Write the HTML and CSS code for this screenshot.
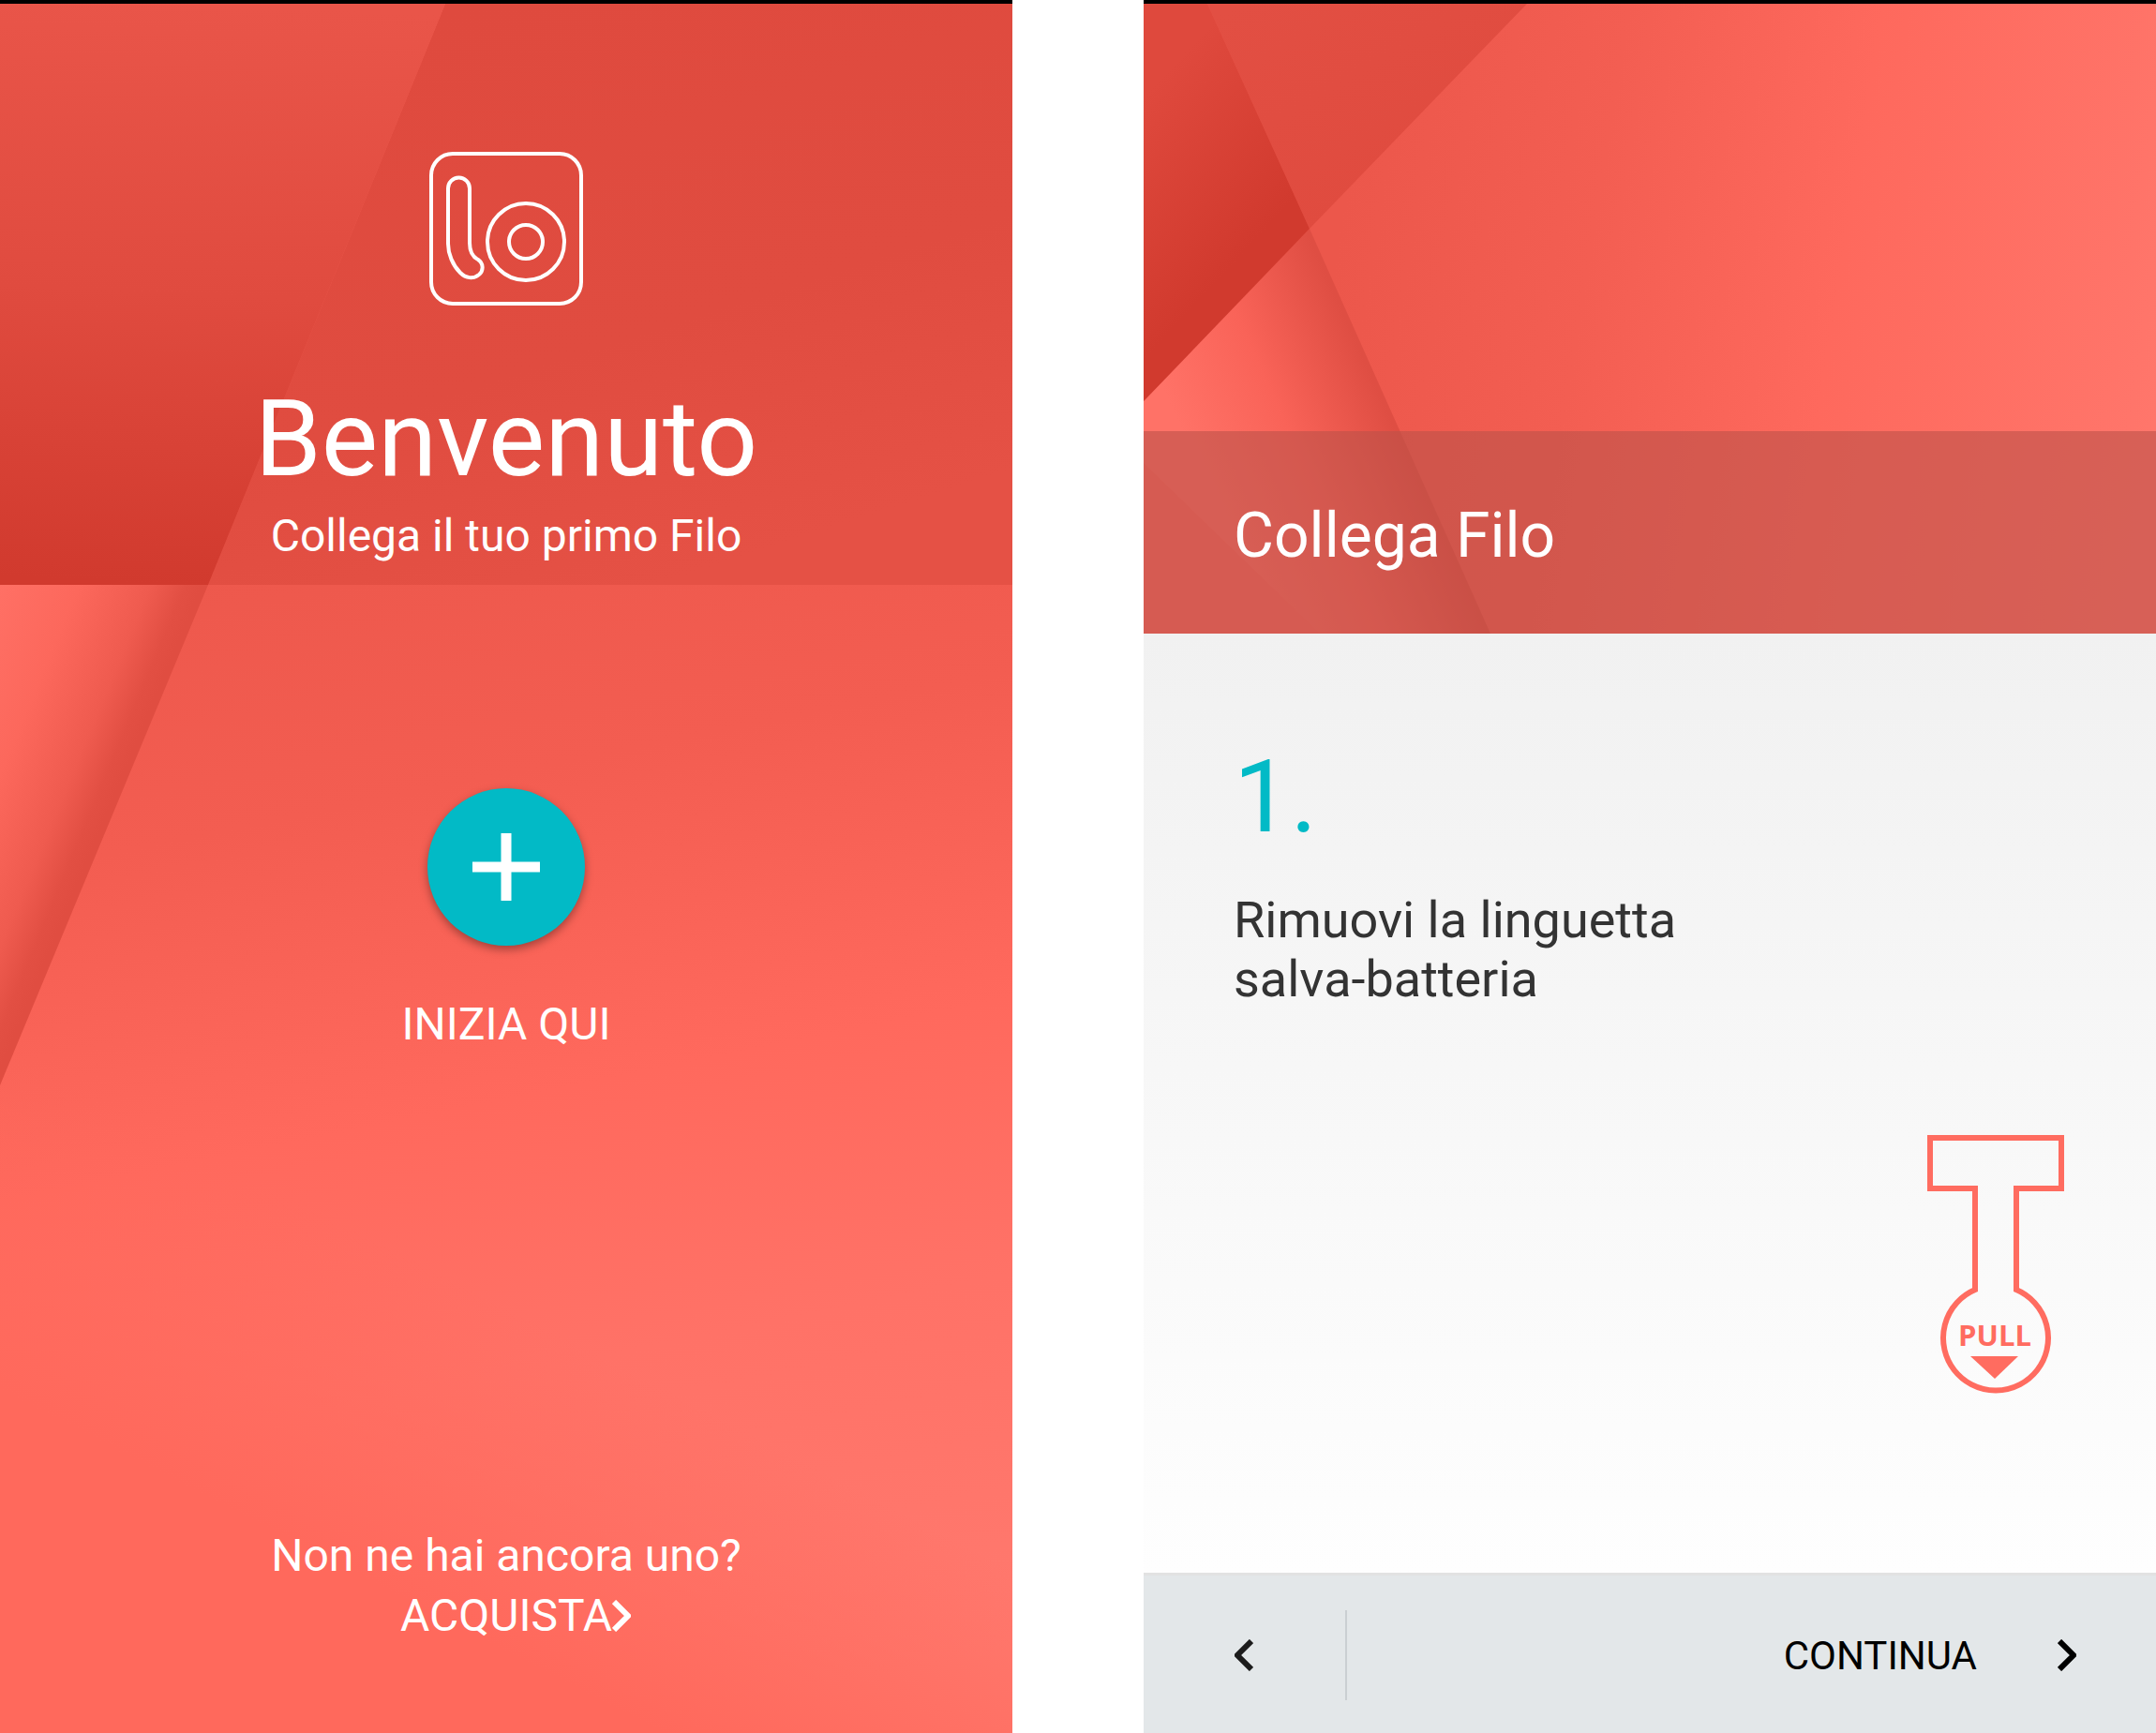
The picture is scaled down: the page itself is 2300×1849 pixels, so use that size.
FILE: index.html
```html
<!DOCTYPE html>
<html lang="it">

<head>
  <meta charset="UTF-8">
  <meta name="viewport" content="width=device-width, initial-scale=1.0">
  <title>Filo</title>
  <link rel="stylesheet" href="styles.css">
</head>

<body>
  <main class="screens">

    <!-- welcome -->
    <section class="screen welcome">
      <svg class="paper" viewBox="0 0 1080 1845" preserveAspectRatio="none" aria-hidden="true">
        <defs>
          <linearGradient id="w-base" gradientUnits="userSpaceOnUse" x1="380" y1="560" x2="640" y2="1845">
            <stop offset="0" stop-color="#ed584c" />
            <stop offset=".22" stop-color="#f35d51" />
            <stop offset=".48" stop-color="#ff695d" />
            <stop offset=".7" stop-color="#ff7267" />
            <stop offset="1" stop-color="#ff796e" />
          </linearGradient>
          <linearGradient id="w-top" gradientUnits="userSpaceOnUse" x1="500" y1="0" x2="700" y2="620">
            <stop offset="0" stop-color="#df4a3e" />
            <stop offset=".6" stop-color="#e04c40" />
            <stop offset="1" stop-color="#e55145" />
          </linearGradient>
          <linearGradient id="w-left" gradientUnits="userSpaceOnUse" x1="220" y1="0" x2="190" y2="620">
            <stop offset="0" stop-color="#e95549" />
            <stop offset=".5" stop-color="#e04b3f" />
            <stop offset="1" stop-color="#d13a2e" />
          </linearGradient>
          <linearGradient id="w-fold" gradientUnits="userSpaceOnUse" x1="-60" y1="760" x2="125" y2="837">
            <stop offset="0" stop-color="#ff7065" />
            <stop offset=".4" stop-color="#fc685c" />
            <stop offset=".75" stop-color="#ef5b4f" />
            <stop offset=".92" stop-color="#e24f43" />
            <stop offset="1" stop-color="#e04d41" />
          </linearGradient>
          <linearGradient id="w-bottom" gradientUnits="userSpaceOnUse" x1="350" y1="1660" x2="500" y2="1370">
            <stop offset="0" stop-color="#ff695c" />
            <stop offset="1" stop-color="#ff695c" stop-opacity="0" />
          </linearGradient>
        </defs>
        <rect width="1080" height="1845" fill="url(#w-base)" />
        <rect width="1080" height="1845" fill="url(#w-bottom)" />
        <path d="M0 620H222L0 1154Z" fill="url(#w-fold)" />
        <path d="M475 0H1080V620H222Z" fill="url(#w-top)" />
        <path d="M0 0H475L222 620H0Z" fill="url(#w-left)" />
      </svg>

      <header class="welcome-top">
        <svg class="logo" viewBox="0 0 164 164" role="img" aria-label="Filo">
          <rect x="2" y="2" width="160" height="160" rx="23" />
          <path d="M20 39a11 11 0 0 1 23 0V97C43 106 46 112 52 115C58 119 58 127 53 131C47 136 39 135 33 129C25 121 20 109 20 98Z" />
          <circle cx="103" cy="96" r="41" />
          <circle cx="103" cy="96" r="18" />
        </svg>
        <h1>Benvenuto</h1>
        <p>Collega il tuo primo Filo</p>
      </header>

      <div class="start">
        <button class="fab" id="start" aria-labelledby="start-label">
          <svg viewBox="0 0 72 72" aria-hidden="true">
            <path d="M36 0V72M0 36H72" />
          </svg>
        </button>
        <label id="start-label" for="start">INIZIA QUI</label>
      </div>

      <footer class="buy">
        <p>Non ne hai ancora uno?</p>
        <a href="#">ACQUISTA<svg class="chevron" viewBox="0 0 20 34" aria-hidden="true"><path d="M2 2L17 17L2 32" /></svg></a>
      </footer>
    </section>

    <!-- step 1 -->
    <section class="screen step">
      <header class="cover">
        <svg class="paper" viewBox="0 0 1080 672" preserveAspectRatio="none" aria-hidden="true">
          <defs>
            <linearGradient id="s-base" gradientUnits="userSpaceOnUse" x1="200" y1="300" x2="1080" y2="440">
              <stop offset="0" stop-color="#ec574b" />
              <stop offset=".3" stop-color="#f35e52" />
              <stop offset=".6" stop-color="#fe695d" />
              <stop offset="1" stop-color="#ff766b" />
            </linearGradient>
            <linearGradient id="s-fold" gradientUnits="userSpaceOnUse" x1="70" y1="520" x2="260" y2="435">
              <stop offset="0" stop-color="#ff7267" />
              <stop offset=".5" stop-color="#f96358" />
              <stop offset="1" stop-color="#df4e43" />
            </linearGradient>
            <linearGradient id="s-left" gradientUnits="userSpaceOnUse" x1="0" y1="100" x2="140" y2="230">
              <stop offset="0" stop-color="#df493d" />
              <stop offset="1" stop-color="#d13a2e" />
            </linearGradient>
            <linearGradient id="s-top" gradientUnits="userSpaceOnUse" x1="100" y1="0" x2="230" y2="220">
              <stop offset="0" stop-color="#e24f43" />
              <stop offset="1" stop-color="#e04b3f" />
            </linearGradient>
          </defs>
          <rect width="1080" height="672" fill="url(#s-base)" />
          <path d="M0 424L177 240L370 672H0Z" fill="url(#s-fold)" />
          <path d="M0 490L188 672H0Z" fill="#fc6a5f" />
          <path d="M68 0H409L177 240Z" fill="url(#s-top)" />
          <path d="M0 0H68L177 240L0 424Z" fill="url(#s-left)" />
        </svg>
        <h2>Collega Filo</h2>
      </header>

      <div class="step-body">
        <span class="number">1.</span>
        <p>Rimuovi la linguetta<br>salva-batteria</p>
        <svg class="tab" viewBox="0 0 146 276" role="img" aria-label="Pull">
          <path class="outline" d="M51 165V57H3V3H143V57H95V165A56 56 0 1 1 51 165Z" />
          <text x="72" y="225">PULL</text>
          <path class="arrow" d="M46 236H97L72 260Z" />
        </svg>
      </div>

      <nav class="bar">
        <button class="back" aria-label="Indietro">
          <svg class="chevron" viewBox="0 0 20 34" aria-hidden="true"><path d="M18 2L3 17L18 32" /></svg>
        </button>
        <button class="next">
          CONTINUA
          <svg class="chevron" viewBox="0 0 20 34" aria-hidden="true"><path d="M2 2L17 17L2 32" /></svg>
        </button>
      </nav>
    </section>

  </main>
</body>

</html>
```
FILE: styles.css
```css
* {
  box-sizing: border-box;
}

body {
  margin: 0;
  background: #fff;
  font-family: Roboto, "Liberation Sans", sans-serif;
}

h1, h2, p {
  margin: 0;
  font-weight: 400;
}

button {
  border: 0;
  padding: 0;
  background: none;
  font: inherit;
  color: inherit;
  cursor: pointer;
}

.screens {
  display: grid;
  grid-template-columns: 1fr 1fr;
  gap: 140px;
  min-height: 100vh;
}

.screen {
  display: flex;
  flex-direction: column;
  border-top: 4px solid #000;
}

/* folded paper behind the content */
.paper {
  position: absolute;
  inset: 0;
  width: 100%;
  height: 100%;
  z-index: -1;
}

.chevron {
  width: 20px;
  height: 34px;
  fill: none;
  stroke: currentColor;
  stroke-width: 6;
}

/* welcome */
.welcome {
  position: relative;
  z-index: 0;
  align-items: center;
  color: #fff;
  font-size: 48px;
  line-height: 64px;
  text-align: center;
}

.welcome-top {
  display: flex;
  flex-direction: column;
  align-items: center;
  padding-top: 158px;

  h1 {
    margin-top: 74px;
    font-size: 114px;
    line-height: 136px;
  }

  p {
    margin-top: 4px;
  }
}

.logo {
  width: 164px;
  height: 164px;
  fill: none;
  stroke: #fff;
  stroke-width: 4;
}

.start {
  display: flex;
  flex-direction: column;
  align-items: center;
  gap: 52px;
  margin-top: 237px;
}

.fab {
  display: grid;
  place-items: center;
  width: 168px;
  height: 168px;
  border-radius: 50%;
  background: #02bac6;
  box-shadow: 0 4px 10px rgba(0, 0, 0, .35);

  svg {
    width: 72px;
    height: 72px;
    stroke: #fff;
    stroke-width: 11;
  }
}

.buy {
  margin-top: auto;
  padding-bottom: 93px;

  a {
    display: inline-flex;
    align-items: center;
    color: inherit;
    text-decoration: none;
  }

  .chevron {
    margin-right: -20px;
  }
}

/* step */
.cover {
  position: relative;
  z-index: 0;
  padding-top: 456px;

  h2 {
    padding: 76px 96px 68px;
    background: rgba(188, 81, 73, .6);
    color: #fff;
    font-size: 66px;
    line-height: 72px;
  }
}

.step-body {
  flex: 1;
  display: flex;
  flex-direction: column;
  padding: 110px 98px 0 96px;
  background: linear-gradient(#f1f1f1, #fefefe);
  color: #333;
  font-size: 54px;
  line-height: 63px;

  p {
    margin-top: 36px;
  }
}

.number {
  color: #02bac6;
  font-size: 108px;
  line-height: 128px;
}

.tab {
  align-self: flex-end;
  width: 146px;
  height: 276px;
  margin-top: 135px;

  .outline {
    fill: none;
    stroke: #ff6c60;
    stroke-width: 6;
  }

  .arrow {
    fill: #ff6c60;
  }

  text {
    fill: #ff6c60;
    font: 700 31px "Open Sans", sans-serif;
    text-anchor: middle;
  }
}

.bar {
  display: flex;
  justify-content: space-between;
  align-items: center;
  height: 171px;
  padding-top: 2px;
  border-top: 3px solid #e2e2e2;
  background: #e3e7e9;
  color: #1c1c1c;
}

.back {
  display: flex;
  align-items: center;
  width: 217px;
  height: 96px;
  padding-left: 97px;
  border-right: 2px solid #cacfd2;
}

.next {
  display: flex;
  align-items: center;
  gap: 86px;
  height: 96px;
  padding-right: 85px;
  color: #000;
  font-size: 42px;
}
```
